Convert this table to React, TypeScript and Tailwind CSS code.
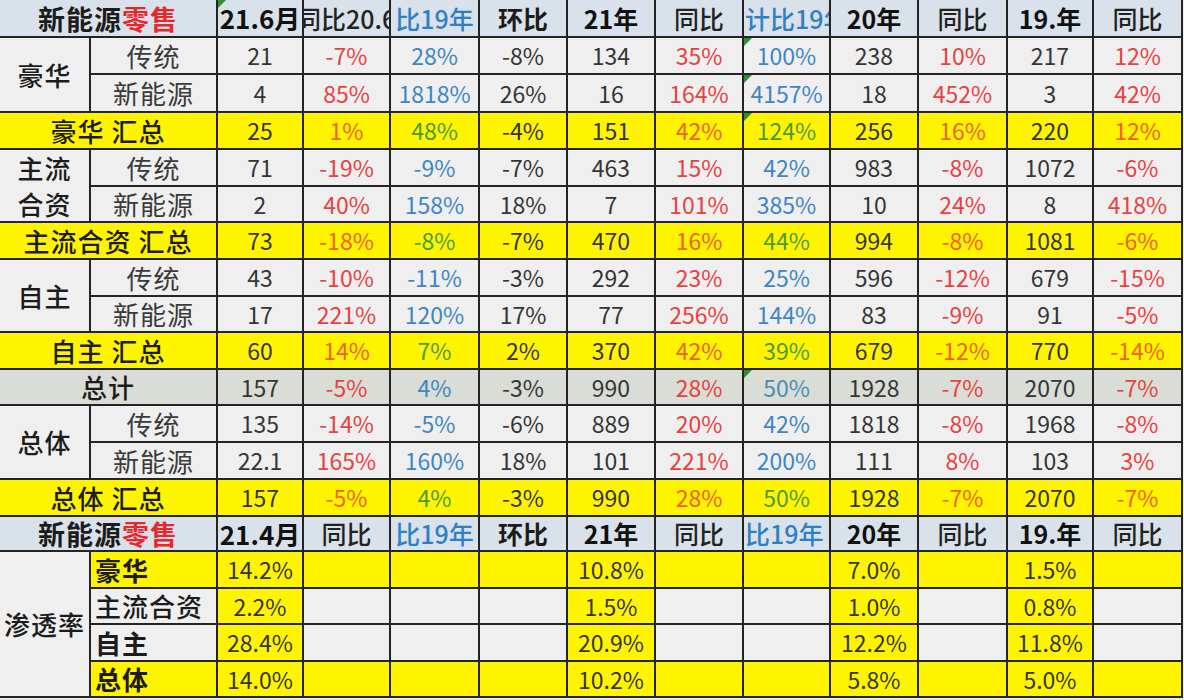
import React from 'react';

type Kind = 'normal' | 'yellow' | 'total';

const FONT = { fontFamily: '"Noto Sans CJK SC", "Noto Sans", sans-serif' };

// colour of each data column for a given row kind
// value index: 0 月, 1 同比, 2 比19, 3 环比, 4 21年, 5 同比, 6 计比19, 7 20年, 8 同比, 9 19年, 10 同比
const tongbi = [1, 5, 8, 10];
const bi19 = [2, 6];

function valueColor(i: number, kind: Kind) {
    if (tongbi.includes(i)) return kind === 'yellow' ? 'text-[#f0621e]' : 'text-[#e8413f]';
    if (bi19.includes(i)) {
        if (kind === 'yellow') return 'text-[#4d9a2e]';
        if (kind === 'total' && i === 6) return 'text-[#4a8db5]';
        return 'text-[#3d86c6]';
    }
    return 'text-[#353535]';
}

function rowBg(kind: Kind) {
    if (kind === 'yellow') return 'bg-[#fff400]';
    if (kind === 'total') return 'bg-[#d9ddd5]';
    return 'bg-[#efeff0]';
}

const Tri = () => (
    <span className="absolute left-0 top-0 w-0 h-0 border-t-[8px] border-r-[8px] border-t-[#2f8f2f] border-r-transparent" />
);

const body: { cat?: string[]; sub?: string; label?: string; kind: Kind; v: string[]; tri?: boolean }[] = [
    { cat: ['豪华'], sub: '传统', kind: 'normal', tri: true, v: ['21', '-7%', '28%', '-8%', '134', '35%', '100%', '238', '10%', '217', '12%'] },
    { sub: '新能源', kind: 'normal', tri: true, v: ['4', '85%', '1818%', '26%', '16', '164%', '4157%', '18', '452%', '3', '42%'] },
    { label: '豪华 汇总', kind: 'yellow', tri: true, v: ['25', '1%', '48%', '-4%', '151', '42%', '124%', '256', '16%', '220', '12%'] },
    { cat: ['主流', '合资'], sub: '传统', kind: 'normal', v: ['71', '-19%', '-9%', '-7%', '463', '15%', '42%', '983', '-8%', '1072', '-6%'] },
    { sub: '新能源', kind: 'normal', v: ['2', '40%', '158%', '18%', '7', '101%', '385%', '10', '24%', '8', '418%'] },
    { label: '主流合资 汇总', kind: 'yellow', v: ['73', '-18%', '-8%', '-7%', '470', '16%', '44%', '994', '-8%', '1081', '-6%'] },
    { cat: ['自主'], sub: '传统', kind: 'normal', v: ['43', '-10%', '-11%', '-3%', '292', '23%', '25%', '596', '-12%', '679', '-15%'] },
    { sub: '新能源', kind: 'normal', v: ['17', '221%', '120%', '17%', '77', '256%', '144%', '83', '-9%', '91', '-5%'] },
    { label: '自主 汇总', kind: 'yellow', v: ['60', '14%', '7%', '2%', '370', '42%', '39%', '679', '-12%', '770', '-14%'] },
    { label: '总计', kind: 'total', tri: true, v: ['157', '-5%', '4%', '-3%', '990', '28%', '50%', '1928', '-7%', '2070', '-7%'] },
    { cat: ['总体'], sub: '传统', kind: 'normal', v: ['135', '-14%', '-5%', '-6%', '889', '20%', '42%', '1818', '-8%', '1968', '-8%'] },
    { sub: '新能源', kind: 'normal', v: ['22.1', '165%', '160%', '18%', '101', '221%', '200%', '111', '8%', '103', '3%'] },
    { label: '总体 汇总', kind: 'yellow', v: ['157', '-5%', '4%', '-3%', '990', '28%', '50%', '1928', '-7%', '2070', '-7%'] },
];

const pen: { name: string; yellow: boolean; bold: boolean; v: Record<number, string> }[] = [
    { name: '豪华', yellow: true, bold: true, v: { 0: '14.2%', 4: '10.8%', 7: '7.0%', 9: '1.5%' } },
    { name: '主流合资', yellow: false, bold: false, v: { 0: '2.2%', 4: '1.5%', 7: '1.0%', 9: '0.8%' } },
    { name: '自主', yellow: false, bold: true, v: { 0: '28.4%', 4: '20.9%', 7: '12.2%', 9: '11.8%' } },
    { name: '总体', yellow: true, bold: true, v: { 0: '14.0%', 4: '10.2%', 7: '5.8%', 9: '5.0%' } },
];

const alwaysYellow = [0, 4, 7, 9];

function HeaderRow({ month, second }: { month: string; second?: boolean }) {
    const hd = 'bg-[#d9e2ea] flex items-center overflow-hidden whitespace-nowrap leading-none';
    return (
        <>
            <div className={`${hd} col-span-2 justify-center text-[27px] font-bold text-[#1c1c1c] tracking-[1px]`}>
                新能源<span className="text-[#e8262b]">零售</span>
            </div>
            <div className={`${hd} relative justify-center text-[26px] font-bold text-[#111]`}>
                {!second && <Tri />}
                {month}
            </div>
            {second ? (
                <div className={`${hd} justify-center text-[25px] font-medium text-[#222]`}>同比</div>
            ) : (
                <div className={`${hd} justify-start text-[25px] font-medium text-[#222]`}>
                    <span className="-ml-[8px]">同比20.6月</span>
                </div>
            )}
            <div className={`${hd} justify-center text-[25px] font-medium text-[#2f7fc6]`}>比19年</div>
            <div className={`${hd} justify-center text-[25px] font-bold text-[#1c1c1c]`}>环比</div>
            <div className={`${hd} justify-center text-[25px] font-bold text-[#111]`}>21年</div>
            <div className={`${hd} justify-center text-[25px] font-medium text-[#222]`}>同比</div>
            <div className={`${hd} justify-start text-[25px] font-medium text-[#2f7fc6]`}>
                <span className="pl-[1px]">{second ? '比19年' : '计比19年'}</span>
            </div>
            <div className={`${hd} justify-center text-[25px] font-bold text-[#111]`}>20年</div>
            <div className={`${hd} justify-center text-[25px] font-medium text-[#222]`}>同比</div>
            <div className={`${hd} justify-center text-[25px] font-bold text-[#111]`}>19.年</div>
            <div className={`${hd} justify-center text-[25px] font-medium text-[#222]`}>同比</div>
        </>
    );
}

export default function App() {
    const cell = 'flex items-center justify-center overflow-hidden whitespace-nowrap leading-none';
    return (
        <div className="w-[1184px] h-[700px] bg-[#ececec] overflow-hidden" style={FONT}>
            <div
                className="grid w-[1183px] gap-[2px] bg-[#242424] pr-[2px] pb-[2px]
                grid-cols-[89px_125px_84px_85px_87px_86px_86px_86px_85px_86px_87px_84px_87px]
                grid-rows-[36px_35px_36px_35px_35px_34px_35px_35px_34px_35px_34px_35px_35px_35px_33px_35px_34px_35px_34px]"
            >
                <HeaderRow month="21.6月" />

                {body.map((r, ri) => (
                    <React.Fragment key={ri}>
                        {r.cat && (
                            <div className={`${cell} row-span-2 flex-col gap-[10px] bg-[#efeff0] text-[26px] font-medium text-[#1c1c1c] tracking-[1px]`}>
                                {r.cat.map((c) => (
                                    <span key={c}>{c}</span>
                                ))}
                            </div>
                        )}
                        {r.sub && (
                            <div className={`${cell} bg-[#efeff0] text-[26px] text-[#3a3a3a] tracking-[1px]`}>{r.sub}</div>
                        )}
                        {r.label && (
                            <div className={`${cell} col-span-2 ${rowBg(r.kind)} text-[26px] font-medium text-[#1c1c1c] tracking-[1px]`}>
                                {r.label}
                            </div>
                        )}
                        {r.v.map((v, i) => (
                            <div key={i} className={`${cell} relative ${rowBg(r.kind)} text-[23px] ${valueColor(i, r.kind)}`}>
                                {r.tri && i === 6 && <Tri />}
                                {v}
                            </div>
                        ))}
                    </React.Fragment>
                ))}

                <HeaderRow month="21.4月" second />

                {pen.map((p, pi) => (
                    <React.Fragment key={pi}>
                        {pi === 0 && (
                            <div className={`${cell} row-span-4 bg-[#efeff0] text-[26px] font-medium text-[#1c1c1c] tracking-[1px]`}>
                                渗透率
                            </div>
                        )}
                        <div
                            className={`${cell} justify-start pl-[4px] ${p.yellow ? 'bg-[#fff400]' : 'bg-[#efeff0]'} text-[26px] ${p.bold ? 'font-bold' : 'font-medium'} text-[#1c1c1c] tracking-[1px]`}
                        >
                            {p.name}
                        </div>
                        {Array.from({ length: 11 }).map((_, i) => (
                            <div
                                key={i}
                                className={`${cell} ${p.yellow || alwaysYellow.includes(i) ? 'bg-[#fff400]' : 'bg-[#efeff0]'} text-[23px] text-[#353535]`}
                            >
                                {p.v[i] ?? ''}
                            </div>
                        ))}
                    </React.Fragment>
                ))}
            </div>
        </div>
    );
}
